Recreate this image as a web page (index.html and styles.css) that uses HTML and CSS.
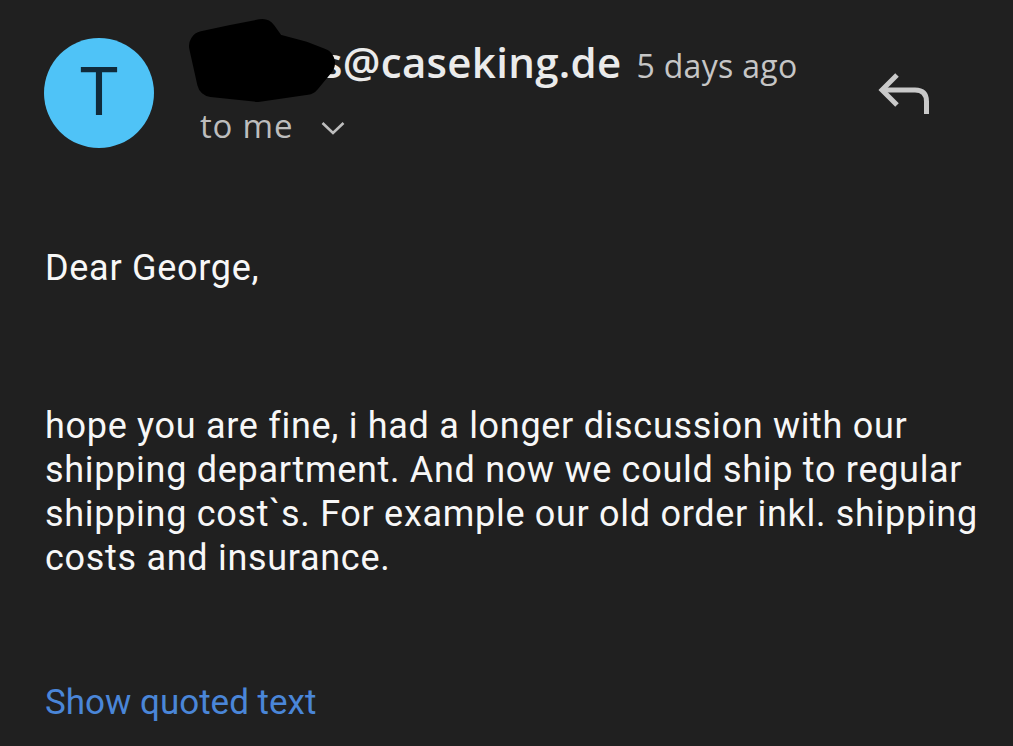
FILE: index.html
```html
<!DOCTYPE html>
<html lang="en">
<head>
<meta charset="utf-8">
<title>Email</title>
<link rel="stylesheet" href="styles.css">
</head>
<body>
<div class="page">
  <header class="header">
    <div class="avatar">T</div>
    <div class="meta">
      <div class="from"><span class="redacted"></span><span class="addr">s@caseking.de</span><span class="when">5 days ago</span></div>
      <div class="to">to me<svg class="chev" viewBox="0 0 24 14" width="24" height="14"><path d="M1.5 2 L12 12 L22.5 2" fill="none" stroke="#bdbdbd" stroke-width="2.6"/></svg></div>
    </div>
    <svg class="reply" viewBox="872 68 62 50" width="62" height="50"><path d="M897 75 L882 90 L897 105" fill="none" stroke="#c9c9c9" stroke-width="5"/><path d="M882 90 H915 Q926.5 90 926.5 101.5 V114" fill="none" stroke="#c9c9c9" stroke-width="5"/></svg>
    <svg class="scribble" viewBox="180 15 180 90" width="180" height="90"><path d="M204 46 L232 40 L262 34 L272 48 L302 56 L320 63 L306 80 L258 87 L212 82 Z" fill="#000" stroke="#000" stroke-width="30" stroke-linejoin="round"/></svg>
  </header>
  <main class="body">
    <p class="greet">Dear George,</p>
    <p class="para">hope you are fine, i had a longer discussion with our shipping department. And now we could ship to regular shipping cost`s. For example our old order inkl. shipping costs and insurance.</p>
    <p class="quoted">Show quoted text</p>
  </main>
</div>
</body>
</html>
```

FILE: styles.css
```css
html, body {
  margin: 0;
  padding: 0;
  background: #202020;
}
.page {
  width: 1013px;
  height: 746px;
  overflow: hidden;
  background: #202020;
  font-family: Roboto, "Liberation Sans", sans-serif;
}
.header {
  position: relative;
  display: flex;
  align-items: flex-start;
  padding: 38px 0 0 44px;
}
.avatar {
  width: 110px;
  height: 110px;
  border-radius: 50%;
  background: #4fc3f7;
  color: #102a3a;
  display: flex;
  align-items: center;
  justify-content: center;
  font: 400 66px/1 Roboto, sans-serif;
  flex: none;
}
.meta {
  margin-left: 46px;
  font-family: "Open Sans", Roboto, sans-serif;
}
.from {
  display: flex;
  align-items: baseline;
  line-height: 48px;
  white-space: nowrap;
}
.redacted {
  display: inline-block;
  width: 122px;
}
.addr {
  font-size: 42px;
  font-weight: 600;
  color: #ebebeb;
  letter-spacing: 0.3px;
}
.when {
  font-size: 32px;
  color: #c6c6c6;
  margin-left: 15px;
  letter-spacing: 0.3px;
}
.to {
  margin-top: 16px;
  font-size: 33px;
  line-height: 40px;
  color: #bdbdbd;
  display: flex;
  align-items: center;
  letter-spacing: 0.8px;
}
.chev {
  margin-left: 28px;
  margin-top: 4px;
}
.reply {
  margin-left: auto;
  margin-right: 79px;
  margin-top: 30px;
}
.scribble {
  position: absolute;
  left: 180px;
  top: 15px;
}
.body {
  padding-left: 45px;
  color: #f7f7f7;
  font-size: 36px;
  line-height: 44px;
  letter-spacing: 0.7px;
}
.body p {
  margin: 0;
}
.greet {
  padding-top: 98px;
}
.para {
  padding-top: 114px;
  width: 950px;
}
.quoted {
  padding-top: 101px;
  color: #4a86d8;
  font-size: 35px;
  letter-spacing: 0;
}
```
